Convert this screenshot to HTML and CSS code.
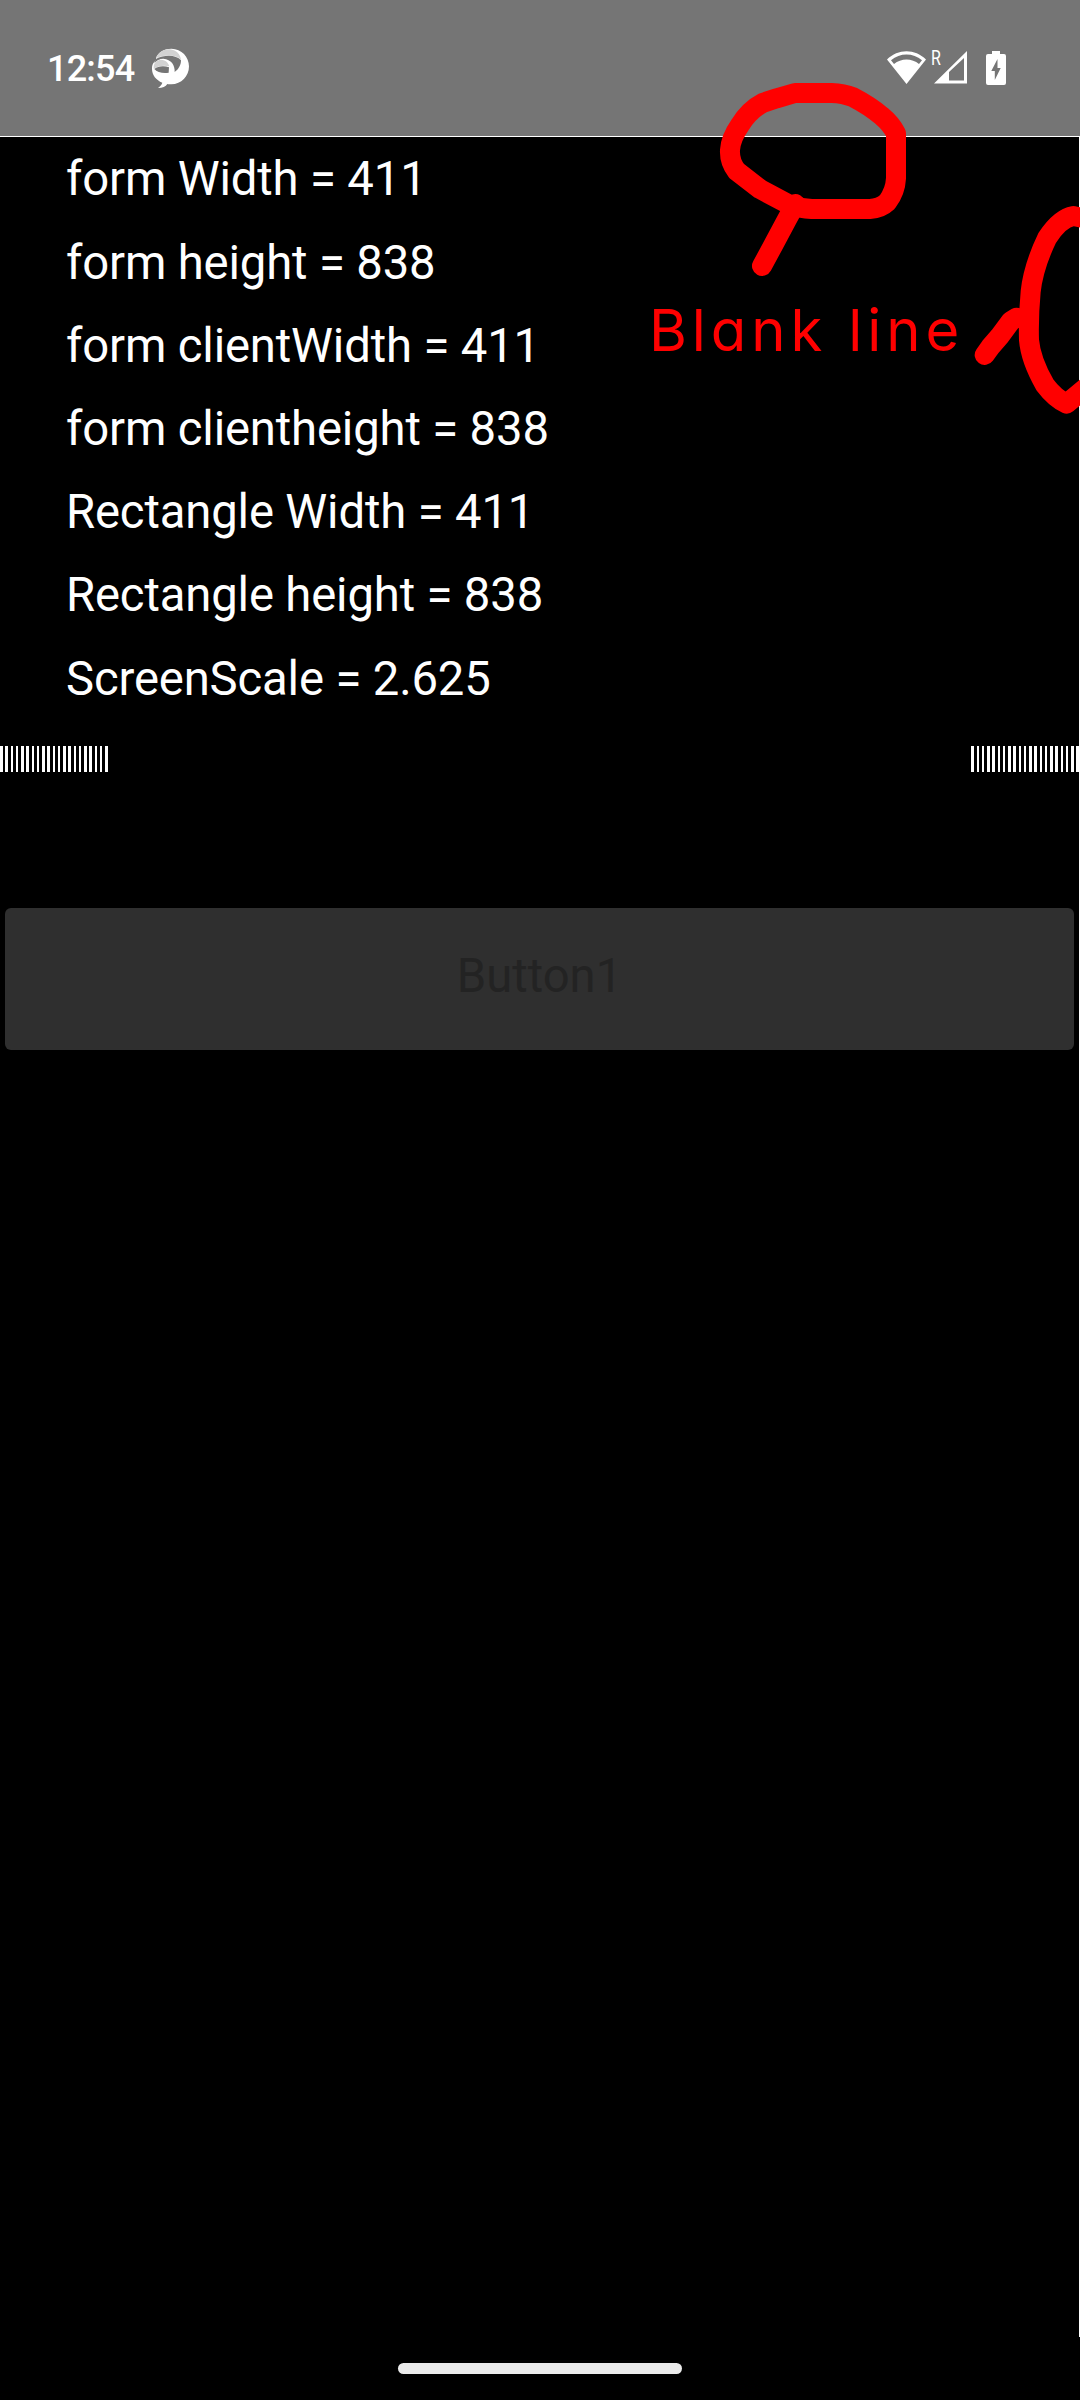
FILE: index.html
```html
<!DOCTYPE html>
<html lang="en">
<head>
<meta charset="utf-8">
<title>Form metrics</title>
<link rel="stylesheet" href="styles.css">
</head>
<body>
<div class="screen">
  <header class="status">
    <span class="clock">12:54</span>
    <svg class="app-icon" viewBox="360 48 120 129" aria-hidden="true">
      <path fill="#fff" d="M378 84C386 65 404 56 424 56C455 57 477 80 477 109C477 139 454 163 424 163C420 163 415 163 412 162C407 170 398 174 384 174C391 169 395 164 397 158C378 150 366 135 366 116C366 99 376 89 391 88C381 89 377 88 378 84Z"/>
      <path fill="#d2d2d2" d="M378 84C386 65 404 57 420 58C440 60 451 74 453 89C438 74 408 73 378 84Z"/>
      <path fill="#757575" d="M377 86C406 73 439 74 453 91C453 105 446 118 434 126C435 105 424 88 400 86C389 86 379 92 373 99C375 93 377 89 383 86Z"/>
      <path fill="#d2d2d2" d="M371 112C371 98 380 90 394 89C407 90 415 98 418 109C402 105 385 107 371 116Z"/>
      <path fill="#757575" d="M373 117C384 108 402 107 417 112L416 128C399 131 381 127 373 117Z"/>
    </svg>
    <div class="indicators">
      <svg class="wifi" viewBox="0 0 39 33" aria-hidden="true">
        <path fill="#fff" fill-rule="evenodd" d="M0 8.5C11-2.5 28-2.5 39 8.5L19.5 33ZM4 9.3L7 13C14 7 25 7 32 13L35 9.3C26 1.7 13 1.7 4 9.3Z"/>
      </svg>
      <div class="signal">
        <svg viewBox="0 0 33 33" aria-hidden="true">
          <path fill="#fff" fill-rule="evenodd" d="M0 32.5L33 0V32.5ZM15 21V29.5H30V7Z"/>
        </svg>
        <span class="roaming">R</span>
      </div>
      <svg class="battery" viewBox="0 0 20 34" aria-hidden="true">
        <path fill="#fff" fill-rule="evenodd" d="M6 0H14V3H18Q20 3 20 5V32Q20 34 18 34H2Q0 34 0 32V5Q0 3 2 3H6ZM11.5 8L5.3 20H8.8V29L14.7 17H11.5Z"/>
      </svg>
    </div>
  </header>

  <main class="form">
    <ul class="metrics">
      <li>form Width = 411</li>
      <li>form height = 838</li>
      <li>form clientWidth = 411</li>
      <li>form clientheight = 838</li>
      <li>Rectangle Width = 411</li>
      <li>Rectangle height = 838</li>
      <li>ScreenScale = 2.625</li>
    </ul>
    <div class="rulers">
      <div class="ruler ruler-start"></div>
      <div class="ruler ruler-end"></div>
    </div>
    <button class="button" type="button">Button1</button>
  </main>

  <footer class="nav"><div class="nav-handle"></div></footer>

  <svg class="marks" viewBox="0 0 1320 1080" aria-hidden="true">
    <g fill="none" stroke="#f00" stroke-width="60" stroke-linecap="round" stroke-linejoin="round">
      <path d="M465 69H575Q610 70 640 82Q690 108 725 138Q752 160 768 190V325Q766 365 742 396Q722 415 690 417H515Q480 415 450 405L360 357L290 303Q268 275 270 240Q272 205 300 165Q328 120 370 98L410 85Z"/>
      <path d="M466 402L440 450L400 525L366 588"/>
      <path d="M1340 446L1300 438Q1260 445 1222 503Q1180 590 1172 665Q1165 740 1167 810Q1172 870 1215 945Q1245 985 1280 1001L1335 955"/>
      <path d="M1130 743L1113 753L1078 800L1052 830L1034 855"/>
    </g>
  </svg>
  <span class="note">Blank line</span>
</div>
</body>
</html>
```
FILE: styles.css
```css
* { box-sizing: border-box; }

body {
  margin: 0;
  background: #000;
  font-family: Roboto, sans-serif;
}

.screen {
  position: relative;
  display: flex;
  flex-direction: column;
  width: 1080px;
  height: 2400px;
  overflow: hidden;
  background: #000;
  color: #fff;
}

.status {
  display: flex;
  align-items: flex-start;
  height: 136px;
  padding: 46px 74px 0 47px;
  background: #757575;
}

.clock {
  width: 103px;
  font-size: 36px;
  font-weight: 500;
  line-height: 46px;
  letter-spacing: -.8px;
  white-space: nowrap;
}

.app-icon {
  width: 40px;
  height: 43px;
}

.indicators {
  display: flex;
  align-items: flex-start;
  margin-left: auto;
  padding-top: 5px;
}

.wifi {
  width: 39px;
  height: 33px;
}

.signal {
  position: relative;
  width: 33px;
  height: 33px;
  margin: 0 19px 0 8px;
}

.signal svg {
  display: block;
  width: 33px;
  height: 33px;
}

.roaming {
  position: absolute;
  left: -3px;
  top: -4px;
  font-size: 20px;
  line-height: 22px;
  transform: scaleX(.8);
  transform-origin: left;
}

.battery {
  width: 20px;
  height: 34px;
}

.form {
  height: 2201px;
  border-top: 1px solid #fff;
  border-right: 1px solid #fff;
}

.metrics {
  margin: 0;
  padding: 1.4px 0 0 66px;
  list-style: none;
  font-size: 47.25px;
  line-height: 83.2px;
  letter-spacing: -.16px;
}

.rulers {
  display: flex;
  justify-content: space-between;
  height: 26px;
  margin-top: 25.2px;
}

.ruler-start {
  width: 108px;
  background: repeating-linear-gradient(90deg, #fff 0 3px, #000 3px 5px, #fff 5px 8px, #000 8px 11px, #fff 11px 13px, #000 13px 16px, #fff 16px 18px, #000 18px 21px);
}

.ruler-end {
  width: 108px;
  background: repeating-linear-gradient(90deg, #fff 0 3px, #000 3px 6px, #fff 6px 8px, #000 8px 11px, #fff 11px 13px, #000 13px 16px, #fff 16px 19px, #000 19px 21px);
}

.button {
  display: block;
  width: 1069px;
  height: 142px;
  margin: 136px 0 0 5px;
  padding: 0 0 6px;
  border: 0;
  border-radius: 6px;
  background: #2f2f2f;
  color: #232323;
  font: 47.25px Roboto, sans-serif;
}

.nav {
  display: flex;
  justify-content: center;
  padding-top: 26px;
}

.nav-handle {
  width: 284px;
  height: 11px;
  border-radius: 6px;
  background: #ebebeb;
}

.marks {
  position: absolute;
  left: 640px;
  top: 70px;
  width: 440px;
  height: 360px;
}

.note {
  position: absolute;
  left: 649px;
  top: 295px;
  color: #f00;
  font-family: Inter, sans-serif;
  font-size: 58px;
  font-feature-settings: "cv11";
  line-height: 70px;
  letter-spacing: 4.9px;
  white-space: nowrap;
}
```
